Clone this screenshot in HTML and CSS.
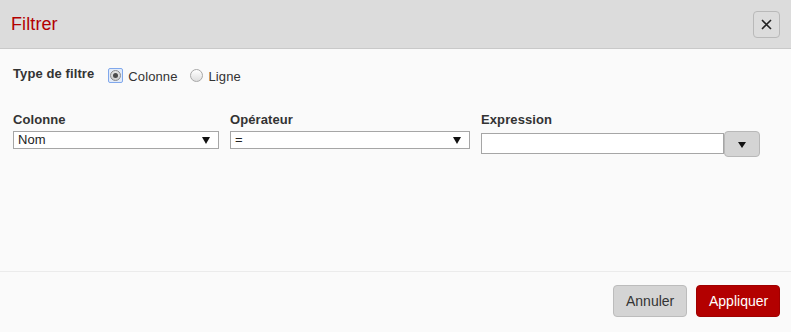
FILE: index.html
```html
<!DOCTYPE html>
<html lang="fr">

<head>
    <meta charset="UTF-8">
    <meta name="viewport" content="width=device-width, initial-scale=1.0">
    <title>Filtrer</title>
    <link rel="stylesheet" href="styles.css">
</head>

<body>
    <div class="dialog">
        <header class="dialog-header">
            <h1>Filtrer</h1>
            <button class="close">
                <svg width="11" height="11" viewBox="0 0 11 11">
                    <path d="M1 1 L10 10 M10 1 L1 10" stroke="#222" stroke-width="1.6" />
                </svg>
            </button>
        </header>

        <main class="dialog-body">
            <div class="filter-type">
                <span class="type-label">Type de filtre</span>
                <div class="options">
                    <label class="option">
                        <span class="focus-ring"><span class="radio checked"><span class="dot"></span></span></span>
                        Colonne
                    </label>
                    <label class="option">
                        <span class="radio"></span>
                        Ligne
                    </label>
                </div>
            </div>

            <div class="fields">
                <div class="field col">
                    <span class="field-label">Colonne</span>
                    <div class="select">
                        <span>Nom</span>
                        <svg width="8" height="7" viewBox="0 0 8 7"><polygon points="0,0 8,0 4,7" fill="#111" /></svg>
                    </div>
                </div>
                <div class="field op">
                    <span class="field-label">Opérateur</span>
                    <div class="select">
                        <span>=</span>
                        <svg width="8" height="7" viewBox="0 0 8 7"><polygon points="0,0 8,0 4,7" fill="#111" /></svg>
                    </div>
                </div>
                <div class="field expr">
                    <span class="field-label">Expression</span>
                    <div class="combo">
                        <input type="text" class="expr-input">
                        <button class="drop">
                            <svg width="8" height="6" viewBox="0 0 8 6"><polygon points="0,0 8,0 4,6" fill="#111" /></svg>
                        </button>
                    </div>
                </div>
            </div>
        </main>

        <footer class="dialog-footer">
            <button class="btn cancel">Annuler</button>
            <button class="btn apply">Appliquer</button>
        </footer>
    </div>
</body>

</html>
```

FILE: styles.css
```css
* {
    margin: 0;
    padding: 0;
    box-sizing: border-box;
}

body {
    font-family: "Liberation Sans", Arial, sans-serif;
    font-size: 13px;
    letter-spacing: 0.1px;
    color: #333;
    background: #fafafa;
}

.dialog {
    width: 791px;
    height: 332px;
    display: flex;
    flex-direction: column;
    background: #fafafa;
}

.dialog-header {
    height: 49px;
    display: flex;
    align-items: center;
    justify-content: space-between;
    padding: 0 11px 1px 11px;
    background: #dcdcdc;
    border-bottom: 1px solid #c9c9c9;
}

.dialog-header h1 {
    font-size: 18px;
    font-weight: normal;
    color: #b30000;
    line-height: 20px;
}

.close {
    width: 27px;
    height: 27px;
    display: flex;
    align-items: center;
    justify-content: center;
    background: #dcdcdc;
    border: 1px solid #b9b9b9;
    border-radius: 4px;
    margin-top: 1px;
}

.dialog-body {
    flex: 1;
    padding: 0 13px;
}

.filter-type {
    display: flex;
    align-items: flex-start;
    padding-top: 17px;
}

.type-label {
    font-weight: bold;
    line-height: 16px;
    color: #333;
    margin-right: 14px;
}

.options {
    display: flex;
    margin-top: 3px;
}

.option {
    display: flex;
    align-items: flex-start;
    line-height: 16px;
    color: #333;
    margin-right: 13px;
}

.focus-ring {
    width: 15px;
    height: 15px;
    display: flex;
    align-items: center;
    justify-content: center;
    border: 1px solid #80a8ec;
    border-radius: 2px;
    background: #e3ebf8;
    margin: -1px 5px 0 0;
}

.radio {
    width: 13px;
    height: 13px;
    border-radius: 50%;
    border: 1px solid #a8a8a8;
    background: linear-gradient(#ffffff, #dedede);
    margin-right: 5px;
    display: flex;
    align-items: center;
    justify-content: center;
}

.radio.checked {
    width: 11px;
    height: 11px;
    margin: 0;
    border-color: #8a8a8a;
    background: linear-gradient(#e4e4e4, #cfcfcf);
}

.dot {
    width: 5px;
    height: 5px;
    border-radius: 50%;
    background: #4a4a4a;
}

.fields {
    display: flex;
    gap: 11px;
    margin-top: 27px;
}

.field {
    display: flex;
    flex-direction: column;
}

.col {
    width: 206px;
}

.op {
    width: 240px;
}

.expr {
    width: 279px;
}

.field-label {
    font-weight: bold;
    line-height: 16px;
    margin-bottom: 3px;
    color: #333;
}

.select {
    height: 18px;
    display: flex;
    align-items: center;
    justify-content: space-between;
    padding: 0 8px 0 4px;
    background: #fff;
    border: 1px solid #a6a6a6;
    color: #222;
    line-height: 16px;
}

.combo {
    display: flex;
    align-items: flex-start;
}

.expr-input {
    width: 243px;
    height: 21px;
    margin-top: 2px;
    background: #fff;
    border: 1px solid #a6a6a6;
    outline: none;
}

.drop {
    width: 36px;
    height: 26px;
    display: flex;
    align-items: center;
    justify-content: center;
    background: #d4d4d4;
    border: 1px solid #b8b8b8;
    border-radius: 4px;
    padding-top: 1px;
}

.dialog-footer {
    height: 61px;
    display: flex;
    justify-content: flex-end;
    gap: 9px;
    padding: 13px 11px 0 0;
    border-top: 1px solid #ebebeb;
}

.btn {
    height: 32px;
    font-family: "Liberation Sans", Arial, sans-serif;
    font-size: 14px;
    border-radius: 4px;
    padding: 0 12px;
}

.cancel {
    width: 74px;
    background: #d4d4d4;
    border: 1px solid #bcbcbc;
    color: #333;
}

.apply {
    width: 84px;
    background: #b30000;
    border: 1px solid #a00000;
    color: #fff;
}
```
